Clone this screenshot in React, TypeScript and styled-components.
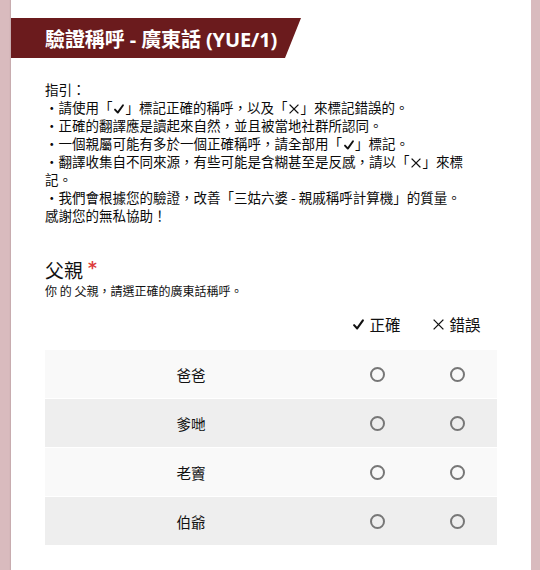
import React from "react";
import styled, { createGlobalStyle } from "styled-components";

const GlobalStyle = createGlobalStyle`
  html, body {
    margin: 0;
    padding: 0;
    background: #d9bbbe;
  }
  body {
    font-family: "Noto Sans CJK TC", "Noto Sans", sans-serif;
    color: #111;
  }
`;

const Card = styled.div`
  margin: 0 9px 0 11px;
  min-height: 570px;
  background: #ffffff;
  padding-top: 18px;
  box-sizing: border-box;
  box-shadow: -1px 0 1px rgba(0, 0, 0, 0.08);
`;

const Banner = styled.div`
  display: flex;
  align-items: center;
  width: 290px;
  height: 40px;
  box-sizing: border-box;
  padding-left: 34px;
  background: #6b1b1d;
  color: #ffffff;
  font-family: "Open Sans", "Noto Sans CJK TC", sans-serif;
  font-weight: 700;
  font-size: 20px;
  letter-spacing: -0.1px;
  clip-path: polygon(0 0, 100% 0, calc(100% - 16px) 100%, 0 100%);
`;

const Content = styled.div`
  padding: 22px 33px 0 34px;
`;

const Guide = styled.div`
  max-width: 432px;
  font-size: 13.5px;
  line-height: 18px;
  color: #0a0a0a;
`;

const GuideLine = styled.div``;

const IconBox = styled.svg<{ $w: number; $gap: number }>`
  display: inline-block;
  width: ${(p) => p.$w}px;
  height: ${(p) => p.$w}px;
  margin: 0 ${(p) => p.$gap}px;
  vertical-align: -1px;
  overflow: visible;
`;

const CheckIcon = ({ size = 10, gap = 1.5 }: { size?: number; gap?: number }) => (
  <IconBox $w={size} $gap={gap} viewBox="0 0 10 10">
    <path d="M1 5.6 L3.8 8.6 L9 1.2" fill="none" stroke="#111" strokeWidth="1.9" strokeLinecap="round" strokeLinejoin="round" />
  </IconBox>
);

const CrossIcon = ({ size = 10, gap = 1.5 }: { size?: number; gap?: number }) => (
  <IconBox $w={size} $gap={gap} viewBox="0 0 10 10">
    <path d="M1 1 L9 9 M9 1 L1 9" fill="none" stroke="#111" strokeWidth="1.2" strokeLinecap="square" />
  </IconBox>
);

const Question = styled.div`
  margin-top: 34px;
`;

const QTitle = styled.div`
  font-size: 19px;
  line-height: 24px;
  font-weight: 400;
  color: #111;
  display: flex;
  align-items: flex-start;
`;

const Required = styled.span`
  color: #dd3b3b;
  margin-left: 5px;
  font-family: "DejaVu Sans", sans-serif;
  font-weight: 700;
  font-size: 17px;
  line-height: 20px;
`;

const QDesc = styled.div`
  font-size: 12px;
  line-height: 16px;
  margin-top: 1px;
  color: #111;
`;

const Grid = styled.div`
  margin-top: 12px;
  display: grid;
  grid-template-columns: 292px 80px 80px;
  row-gap: 1px;
`;

const HeadCell = styled.div`
  height: 38px;
  display: flex;
  align-items: flex-start;
  justify-content: center;
  padding-top: 3px;
  box-sizing: border-box;
  font-size: 15.5px;
  line-height: 20px;
  color: #111;
  & > svg {
    margin: 5px 5px 0 0;
  }
`;

const Row = styled.div<{ $alt: boolean }>`
  display: contents;
  & > div {
    background: ${(p) => (p.$alt ? "#eeeeee" : "#f9f9f9")};
  }
`;

const Cell = styled.div`
  height: 48px;
  display: flex;
  align-items: center;
  justify-content: center;
  font-size: 14.5px;
  color: #111;
`;

const Radio = styled.span`
  width: 15px;
  height: 15px;
  box-sizing: border-box;
  border: 2px solid #777777;
  border-radius: 50%;
  background: transparent;
`;

const answers = ["爸爸", "爹哋", "老竇", "伯爺"];

export default function App() {
  return (
    <>
      <GlobalStyle />
      <Card>
        <Banner>驗證稱呼 - 廣東話 (YUE/1)</Banner>
        <Content>
          <Guide>
            <GuideLine>指引：</GuideLine>
            <GuideLine>
              ・請使用「<CheckIcon />」標記正確的稱呼，以及「<CrossIcon />」來標記錯誤的。
            </GuideLine>
            <GuideLine>・正確的翻譯應是讀起來自然，並且被當地社群所認同。</GuideLine>
            <GuideLine>
              ・一個親屬可能有多於一個正確稱呼，請全部用「<CheckIcon />」標記。
            </GuideLine>
            <GuideLine>
              ・翻譯收集自不同來源，有些可能是含糊甚至是反感，請以「<CrossIcon />」來標記。
            </GuideLine>
            <GuideLine>
              ・我們會根據您的驗證，改善「三姑六婆 - 親戚稱呼計算機」的質量。
            </GuideLine>
            <GuideLine>感謝您的無私協助！</GuideLine>
          </Guide>
          <Question>
            <QTitle>
              父親<Required>*</Required>
            </QTitle>
            <QDesc>你 的 父親，請選正確的廣東話稱呼。</QDesc>
            <Grid>
              <HeadCell />
              <HeadCell>
                <CheckIcon size={11} gap={0} />
                正確
              </HeadCell>
              <HeadCell>
                <CrossIcon size={11} gap={0} />
                錯誤
              </HeadCell>
              {answers.map((a, i) => (
                <Row key={a} $alt={i % 2 === 1}>
                  <Cell>{a}</Cell>
                  <Cell>
                    <Radio />
                  </Cell>
                  <Cell>
                    <Radio />
                  </Cell>
                </Row>
              ))}
            </Grid>
          </Question>
        </Content>
      </Card>
    </>
  );
}
